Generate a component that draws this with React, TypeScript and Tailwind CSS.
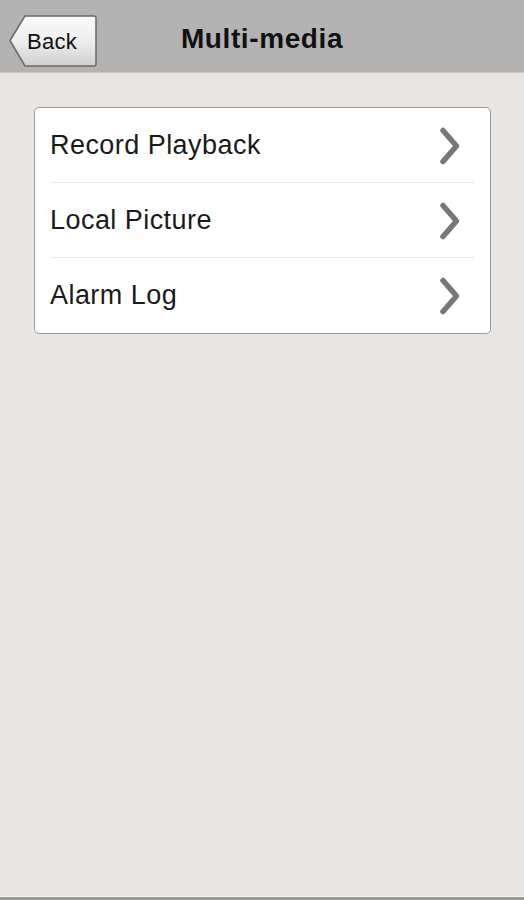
import React from "react";

const Chevron = () => (
  <svg width="24" height="40" viewBox="0 0 24 40" className="shrink-0">
    <path d="M5 4.5 L18.5 20 L5 35.5" fill="none" stroke="#777777" strokeWidth="5.5" strokeLinecap="round" strokeLinejoin="round" />
  </svg>
);

const Row = ({ label, last }: { label: string; last?: boolean }) => (
  <div className="flex h-[75px] items-center justify-between pl-[15px] pr-[28px] relative">
    <span className="text-[27px] text-[#1a1a1a] tracking-[0.45px]">{label}</span>
    <Chevron />
    {!last && <div className="absolute bottom-0 left-[16px] right-[16px] h-px bg-[#e8e8e8]" />}
  </div>
);

export default function App() {
  return (
    <div
      className="w-[524px] h-[900px] bg-[#e9e5e2] flex flex-col"
      style={{ fontFamily: '"Liberation Sans", Arial, sans-serif' }}
    >
      <div className="h-[73px] bg-[#b3b3b3] relative flex items-center justify-center border-b border-[#c9c7c4]">
        <div className="absolute left-[8px] top-[14px] w-[90px] h-[54px]">
          <svg width="90" height="54" viewBox="0 0 90 54" className="absolute inset-0">
            <defs>
              <linearGradient id="bg" x1="0" y1="0" x2="0" y2="1">
                <stop offset="0" stopColor="#fafafa" />
                <stop offset="0.5" stopColor="#eeeeee" />
                <stop offset="1" stopColor="#cfcfcf" />
              </linearGradient>
            </defs>
            <path d="M2 26.5 L17 2 L86 2 Q88 2 88 4 L88 50 Q88 52 86 52 L17 52 Z" fill="url(#bg)" stroke="#6a6a6a" strokeWidth="1.5" strokeLinejoin="round" />
          </svg>
          <span className="absolute left-[19px] top-[16px] text-[22px] leading-[24px] text-[#111] tracking-[0.3px]">Back</span>
        </div>
        <span className="text-[28px] font-bold text-[#111] pt-[6px] tracking-[0.6px]">Multi-media</span>
      </div>
      <div className="px-[34px] pt-[34px]">
        <div className="bg-white border border-[#9b9b9b] rounded-[5px] w-[457px]">
          <Row label="Record Playback" />
          <Row label="Local Picture" />
          <Row label="Alarm Log" last />
        </div>
      </div>
      <div className="flex-1" />
      <div className="h-[1px] bg-[#f6f4f2]" />
      <div className="h-[3px] bg-[#9a9a96]" />
    </div>
  );
}
